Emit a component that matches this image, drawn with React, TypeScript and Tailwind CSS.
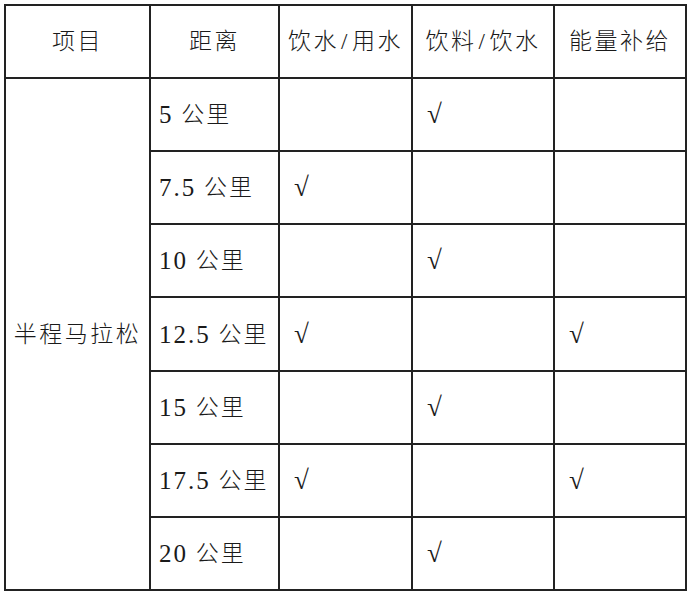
const rows: { km: string; marks: [boolean, boolean, boolean] }[] = [
  { km: '5', marks: [false, true, false] },
  { km: '7.5', marks: [true, false, false] },
  { km: '10', marks: [false, true, false] },
  { km: '12.5', marks: [true, false, true] },
  { km: '15', marks: [false, true, false] },
  { km: '17.5', marks: [true, false, true] },
  { km: '20', marks: [false, true, false] },
];

// header labels, split on "/" so the slash gets a half-width box like the source font
const headers = ['项目', '距离', '饮水/用水', '饮料/饮水', '能量补给'];

function HeaderLabel({ text }: { text: string }) {
  const parts = text.split('/');
  if (parts.length === 1) return <>{text}</>;
  return (
    <>
      {parts[0]}
      <span className="px-[2px]">/</span>
      {parts[1]}
    </>
  );
}

export default function App() {
  return (
    <div
      className="w-[690px] h-[595px] bg-white pt-[4px] pl-[4px] text-[23px] leading-none tracking-[2.5px] text-[#1a1a1a]"
      style={{ fontFamily: '"Liberation Serif", "Noto Sans CJK SC", serif' }}
    >
      <div className="grid w-fit grid-cols-[143px_127px_131px_140px_130px] grid-rows-[71px_71px_71px_71px_72px_71px_71px_71px] gap-[2px] bg-[#222] p-[2px]">
        {headers.map(h => (
          <div key={h} className="flex items-center justify-center bg-white font-light">
            <HeaderLabel text={h} />
          </div>
        ))}

        <div className="row-span-7 flex items-center justify-center bg-white font-light">半程马拉松</div>

        {rows.map(r => (
          <div key={r.km} className="contents">
            <div className="flex items-center bg-white pl-[8px] font-light tracking-[2px]">
              <span className="text-[25px]">{r.km}</span>
              <span>&nbsp;公里</span>
            </div>
            {r.marks.map((m, i) => (
              <div key={i} className="flex items-center bg-white pl-[14px] text-[27px]">
                {m ? '√' : ''}
              </div>
            ))}
          </div>
        ))}
      </div>
    </div>
  );
}
